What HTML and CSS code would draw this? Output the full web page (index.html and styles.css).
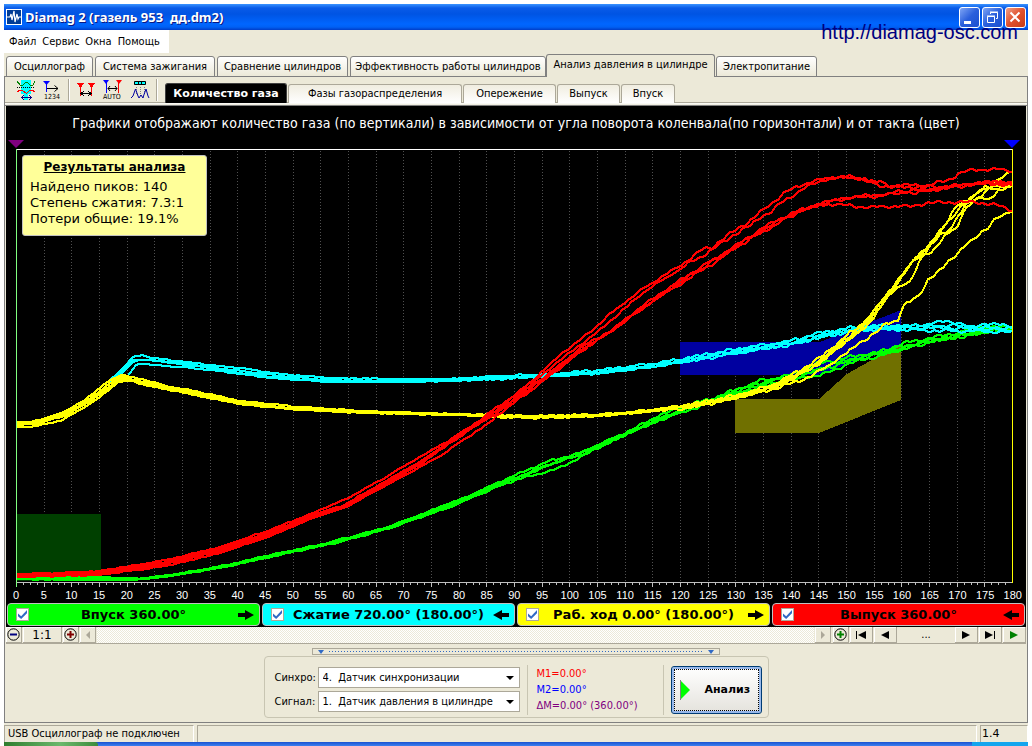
FILE: index.html
```html
<!DOCTYPE html>
<html lang="ru">
<head>
<meta charset="utf-8">
<title>Diamag 2</title>
<link rel="stylesheet" href="styles.css">
</head>
<body>
<div class="window">
  <header class="titlebar">
    <svg class="app-icon" width="16" height="16" viewBox="0 0 16 16" aria-hidden="true"><rect x="0.500" y="0.500" width="15" height="15" fill="#003c96" stroke="#fff"/><path d="M1 8h3l1-3 1 6 2-9 1 11 2-8 1 5 1-2h2" fill="none" stroke="#fff" stroke-width="1.200"/></svg>
    <h1 class="title">Diamag 2 (газель 953&nbsp; дд.dm2)</h1>
    <button class="win-btn" aria-label="Свернуть"><svg width="21" height="21" viewBox="0 0 21 21"><path d="M5 14h7v3H5z" fill="#fff"/></svg></button>
    <button class="win-btn" aria-label="Восстановить"><svg width="21" height="21" viewBox="0 0 21 21" fill="none" stroke="#fff"><path d="M8.500 7V5.500h7v6H14M8 5h8M5.500 9.500h7v6h-7zM5 9h8"/></svg></button>
    <button class="win-btn win-close" aria-label="Закрыть"><svg width="21" height="21" viewBox="0 0 21 21"><path d="M5.500 5.500l9 9M14.500 5.500l-9 9" stroke="#fff" stroke-width="2"/></svg></button>
    <a class="site-link" href="#">http://diamag-osc.com</a>
  </header>
  <nav class="menu">
    <button>Файл</button><button>Сервис</button><button>Окна</button><button>Помощь</button>
  </nav>
  <div class="tabs" role="tablist">
    <button class="tab tab-osc" role="tab">Осциллограф</button>
    <button class="tab tab-ign" role="tab">Система зажигания</button>
    <button class="tab tab-cmp" role="tab">Сравнение цилиндров</button>
    <button class="tab tab-eff" role="tab">Эффективность работы цилиндров</button>
    <button class="tab tab-prs is-active" role="tab" aria-selected="true">Анализ давления в цилиндре</button>
    <button class="tab tab-pwr" role="tab">Электропитание</button>
  </div>
  <main class="panel">
    <div class="toolbar">
      <div class="tools">
        <button class="tool" aria-label="Фазы"><svg width="20" height="20" viewBox="0 0 20 20" fill="none" shape-rendering="crispEdges"><path d="M5 0h10v14h-3v6H8v-6H5z" fill="#00ffff"/><path d="M1 1l3 4h3l3-3h1l3 3h3l2-4" stroke="#008000"/><path d="M1 7.500h18" stroke="#000" stroke-dasharray="1 1"/><path d="M1 12l3-2h2l4 3h1l3-3h2l3 2" stroke="#f00"/><path d="M6 17.500h9M8 15l-2 2.500L8 20M13 15l2 2.500-2 2.500" stroke="#000080"/></svg></button>
        <button class="tool" aria-label="Нумерация"><svg width="20" height="20" viewBox="0 0 20 20" fill="none"><path d="M1 1h7L4.500 5z" fill="#00f"/><path d="M4.500 2v10" stroke="#00f"/><path d="M5 8.500h11M12.500 5.500l3.500 3-3.500 3" stroke="#000"/><text x="2" y="19" class="icon-num">1234</text></svg></button>
        <span class="tool-sep"></span>
        <button class="tool" aria-label="Маркеры"><svg width="20" height="20" viewBox="0 0 20 20" fill="none" shape-rendering="crispEdges"><path d="M1 3h7L4.500 8zM12 3h7l-3.500 5z" fill="#f00"/><path d="M4.500 4v12M15.500 4v12" stroke="#f00"/><path d="M5 13.500h10M8 11l-3 2.500L8 16M12 11l3 2.500L12 16" stroke="#000"/></svg></button>
        <button class="tool" aria-label="Авто"><svg width="22" height="20" viewBox="0 0 22 20" fill="none"><path d="M1 0h6L4 4z" fill="#00f"/><path d="M4.500 1v12" stroke="#00f"/><path d="M14 0h6l-3 4z" fill="#f00"/><path d="M16.500 1v12" stroke="#f00"/><path d="M6 8.500h9M8 6L6 8.500 8 11M13 6l2 2.500-2 2.500" stroke="#000"/><text x="1" y="19" class="icon-num">AUTO</text></svg></button>
        <button class="tool" aria-label="Пики"><svg width="20" height="20" viewBox="0 0 20 20" fill="none"><path d="M4.500 1.500h11v3h-11z" fill="#0ff" stroke="#000"/><path d="M8.500 1v4M11.500 1v4" stroke="#000"/><path d="M6.500 7v7M10.500 7v10M14.500 7v7" stroke="#808080" stroke-dasharray="1 1"/><path d="M1 18l2-2 2.500-7L8 16l1 2 2-3 2 3 .5-2L16 9l2 7 1 2" stroke="#0000a0"/></svg></button>
        <span class="tool-sep"></span>
      </div>
      <div class="subtabs" role="tablist">
        <button class="subtab sub-gas is-active" role="tab" aria-selected="true">Количество газа</button>
        <button class="subtab sub-phase" role="tab">Фазы газораспределения</button>
        <button class="subtab sub-adv" role="tab">Опережение</button>
        <button class="subtab sub-out" role="tab">Выпуск</button>
        <button class="subtab sub-in" role="tab">Впуск</button>
      </div>
    </div>
    <section class="chart">
      <h2 class="caption">Графики отображают количество газа (по вертикали) в зависимости от угла поворота коленвала(по горизонтали) и от такта (цвет)</h2>
      <div class="markers">
        <svg width="16" height="9" viewBox="0 0 16 9"><path d="M0 0h16L8 8z" fill="#800080"/></svg>
        <svg width="16" height="9" viewBox="0 0 16 9"><path d="M0 0h16L8 8z" fill="#00f"/></svg>
      </div>
      <div class="plot">
        <svg id="plot" class="plot-svg" viewBox="16 149 997 438" preserveAspectRatio="none" shape-rendering="crispEdges" aria-label="Количество газа">
          <g id="grid"></g>
          <path d="M17 514h84v67H17z" fill="#004000"/>
          <path d="M680 342h140l81-32v34l-83 31H680z" fill="#0000a0"/>
          <path d="M735 399h84l28-25 23-13 31-17v56l-82 33h-84z" fill="#707000"/>
          <g id="curves"></g>
          <path d="M16 149.500h997" stroke="#fff"/>
          <path d="M16 582.500h997" stroke="#c0c0c0"/>
          <path d="M16.500 149v438" stroke="#80ff80"/>
          <path d="M1012.500 149v434" stroke="#ff0"/>
        </svg>
        <aside class="results">
          <h3>Результаты анализа</h3>
          <p>Найдено пиков: 140</p>
          <p>Степень сжатия: 7.3:1</p>
          <p>Потери общие: 19.1%</p>
        </aside>
      </div>
      <div class="axis">
        <span>0</span><span>5</span><span>10</span><span>15</span><span>20</span><span>25</span><span>30</span><span>35</span><span>40</span><span>45</span><span>50</span><span>55</span><span>60</span><span>65</span><span>70</span><span>75</span><span>80</span><span>85</span><span>90</span><span>95</span><span>100</span><span>105</span><span>110</span><span>115</span><span>120</span><span>125</span><span>130</span><span>135</span><span>140</span><span>145</span><span>150</span><span>155</span><span>160</span><span>165</span><span>170</span><span>175</span><span>180</span>
      </div>
      <div class="legend">
        <div class="stroke s-intake"><input id="c1" type="checkbox" checked><label for="c1">Впуск 360.00°</label><svg width="16" height="10" viewBox="0 0 16 10"><path d="M0 3h7V0l9 5-9 5V7H0z"/></svg></div>
        <div class="stroke s-comp"><input id="c2" type="checkbox" checked><label for="c2">Сжатие 720.00° (180.00°)</label><svg width="16" height="10" viewBox="0 0 16 10"><path d="M16 3H9V0L0 5l9 5V7h7z"/></svg></div>
        <div class="stroke s-power"><input id="c3" type="checkbox" checked><label for="c3">Раб. ход 0.00° (180.00°)</label><svg width="16" height="10" viewBox="0 0 16 10"><path d="M0 3h7V0l9 5-9 5V7H0z"/></svg></div>
        <div class="stroke s-exh"><input id="c4" type="checkbox" checked><label for="c4">Выпуск 360.00°</label><svg width="16" height="10" viewBox="0 0 16 10"><path d="M16 3H9V0L0 5l9 5V7h7z"/></svg></div>
      </div>
    </section>
    <div class="scrollrow">
      <button class="sbtn" aria-label="Уменьшить"><svg width="13" height="13" viewBox="0 0 13 13"><circle cx="6.500" cy="6.500" r="5.700" fill="none" stroke="#000"/><path d="M3 5.500h7v2H3z" fill="#000080"/></svg></button>
      <button class="sbtn sbtn-scale">1:1</button>
      <button class="sbtn" aria-label="Увеличить"><svg width="13" height="13" viewBox="0 0 13 13"><circle cx="6.500" cy="6.500" r="5.700" fill="none" stroke="#000"/><path d="M3 5.500h7v2H3zM5.500 3h2v7h-2z" fill="#800000"/></svg></button>
      <button class="sbtn" aria-label="Влево"><svg width="8" height="8" viewBox="0 0 8 8"><path d="M6 0v8L2 4z" fill="#aca899"/></svg></button>
      <div class="track"></div>
      <button class="sbtn" aria-label="Вправо"><svg width="8" height="8" viewBox="0 0 8 8"><path d="M2 0v8l4-4z" fill="#aca899"/></svg></button>
      <button class="sbtn sbtn-add" aria-label="Добавить"><svg width="13" height="13" viewBox="0 0 13 13"><circle cx="6.500" cy="6.500" r="5.700" fill="none" stroke="#000"/><path d="M3 5.500h7v2H3zM5.500 3h2v7h-2z" fill="#008000"/></svg></button>
      <button class="sbtn sbtn-nav" aria-label="В начало"><svg width="10" height="8" viewBox="0 0 10 8"><path d="M0 0h1v8H0zM10 0v8L2 4z"/></svg></button>
      <button class="sbtn sbtn-nav" aria-label="Назад"><svg width="8" height="8" viewBox="0 0 8 8"><path d="M8 0v8L0 4z"/></svg></button>
      <span class="dots">...</span>
      <button class="sbtn sbtn-nav" aria-label="Вперёд"><svg width="8" height="8" viewBox="0 0 8 8"><path d="M0 0v8l8-4z"/></svg></button>
      <button class="sbtn sbtn-nav" aria-label="В конец"><svg width="10" height="8" viewBox="0 0 10 8"><path d="M9 0h1v8H9zM0 0v8l8-4z"/></svg></button>
      <button class="sbtn sbtn-nav" aria-label="Пуск"><svg width="8" height="8" viewBox="0 0 8 8"><path d="M0 0v8l8-4z" fill="#008000"/></svg></button>
    </div>
    <div class="controls">
      <div class="splitter"><svg width="8" height="4" viewBox="0 0 8 4"><path d="M1 0h6L4 4z" fill="#316ac5"/></svg><i></i><svg width="8" height="4" viewBox="0 0 8 4"><path d="M1 0h6L4 4z" fill="#316ac5"/></svg></div>
      <div class="group">
        <div class="fields">
          <label for="sync">Синхро:</label>
          <span class="combo"><select id="sync"><option>4.&nbsp; Датчик синхронизации</option></select></span>
          <label for="sig">Сигнал:</label>
          <span class="combo"><select id="sig"><option>1.&nbsp; Датчик давления в цилиндре</option></select></span>
        </div>
        <div class="marks">
          <p class="m1">M1=0.00°</p>
          <p class="m2">M2=0.00°</p>
          <p class="dm">ΔM=0.00° (360.00°)</p>
        </div>
        <button class="analyze"><svg width="11" height="20" viewBox="0 0 11 20"><path d="M1 1v18l9-9z" fill="#0f0"/><path d="M0.500 0v20" stroke="#808080"/></svg><span>Анализ</span></button>
      </div>
    </div>
  </main>
  <footer class="status">
    <span class="pane pane-usb">USB Осциллограф не подключен</span>
    <span class="pane pane-mid"></span>
    <span class="pane pane-ver">1.4</span>
  </footer>
  <div class="taskbar"><span class="start"></span><span class="tray"></span></div>
</div>
<script src="chart.js"></script>
</body>
</html>
```
FILE: styles.css
```css
* { box-sizing: border-box; }
body {
  margin: 0;
  background: #fff;
  color: #000;
  font: 11px/16px "DejaVu Sans Condensed", "DejaVu Sans", sans-serif;
}
h1, h2, h3, p { margin: 0; }
button { margin: 0; padding: 0; border: 0; background: none; color: inherit; font: inherit; white-space: nowrap; }
svg { display: block; flex: none; }
.window { display: flex; flex-direction: column; min-height: 100vh; padding: 4px 4px 0; }
.titlebar {
  position: relative;
  display: flex;
  align-items: center;
  gap: 2px;
  height: 26px;
  padding: 0 2px;
  background: linear-gradient(#3a93ff 0, #0a5be8 4px, #0054e3 10px, #0066ff 20px, #0061f5 23px, #003dc8 26px);
}
.title {
  flex: 1;
  padding-left: 1px;
  color: #fff;
  font: bold 13px/20px "Noto Sans", sans-serif;
  text-shadow: 1px 1px 0 #0a1883;
}
.win-btn {
  width: 21px;
  height: 21px;
  border: 1px solid #fff;
  border-radius: 3px;
  background: linear-gradient(135deg, #7fa5f5, #2a5fdc 50%, #1a4fd0);
}
.win-btn svg { margin: -1px; }
.win-close { background: linear-gradient(135deg, #f0a088, #e0502c 50%, #c83c14); }
.site-link {
  position: absolute;
  right: 10px;
  top: 17px;
  z-index: 1;
  color: #000080;
  font: 20px/22px "Liberation Sans", sans-serif;
  text-decoration: none;
}
.menu, .tabs, .panel, .status { background: #ece9d8; }
.menu { display: flex; height: 24px; }
.menu button { height: 23px; padding: 0 3px; background: #fff; }
.menu button:first-child { padding-left: 5px; }
.menu button:last-child { padding-right: 9px; }
.tabs { display: flex; align-items: flex-end; gap: 2px; height: 23px; padding-left: 2px; box-shadow: inset 0 -1px #808080; }
.tab {
  height: 21px;
  border: 1px solid #808080;
  border-radius: 3px 3px 0 0;
  background: linear-gradient(#fff, #ece9d8);
}
.tab.is-active { height: 23px; margin: 0 -1px 0 -2px; padding-bottom: 2px; border-bottom: 0; background: #ece9d8; }
.tab-osc { width: 87px; }
.tab-ign { width: 120px; }
.tab-cmp { width: 131px; }
.tab-eff { width: 196px; }
.tab-prs { width: 169px; }
.tab-pwr { width: 101px; }
.panel { flex: 1; display: flex; flex-direction: column; border: solid #808080; border-width: 0 1px 1px; }
.toolbar {
  display: flex;
  align-items: flex-end;
  height: 29px;
  padding-bottom: 3px;
  background: linear-gradient(#ece9d8 25px, #aca899 25px, #aca899 26px, #fff 26px, #ece9d8 28px, #808080 28px);
}
.tools { display: flex; align-items: center; gap: 6px; width: 160px; height: 26px; padding-left: 11px; }
.tool-sep { width: 2px; height: 22px; border-left: 1px solid #aca899; border-right: 1px solid #fff; }
.icon-num { fill: #000; font: 7px "DejaVu Sans Condensed", "DejaVu Sans", sans-serif; }
.subtabs { display: flex; gap: 1px; align-items: flex-end; }
.subtab {
  height: 19px;
  border: 1px solid #aca899;
  border-bottom: 0;
  border-radius: 3px 3px 0 0;
  background: linear-gradient(#f0ede0, #fff);
}
.subtab.is-active { height: 20px; background: #000; color: #fff; font-family: "DejaVu Sans", sans-serif; font-weight: bold; border-color: #404040; }
.sub-gas { width: 122px; }
.sub-phase { width: 174px; }
.sub-adv { width: 93px; }
.sub-out { width: 63px; }
.sub-in { width: 54px; }
.chart { flex: 1; display: flex; flex-direction: column; margin: 0 1px; background: #000; }
.caption { margin: 8px 0; color: #fff; font: 14px/18px "DejaVu Sans Condensed", "DejaVu Sans", sans-serif; text-align: center; white-space: nowrap; }
.markers { display: flex; justify-content: space-between; height: 9px; padding: 0 6px 0 2px; }
.plot { position: relative; flex: 1; display: flex; min-height: 300px; margin: 0 13px 0 10px; }
.plot-svg { position: absolute; inset: 0; width: 100%; height: 100%; }
.plot-svg path, .plot-svg polyline { vector-effect: non-scaling-stroke; }
.results {
  position: absolute;
  left: 6px;
  top: 6px;
  width: 185px;
  height: 81px;
  padding: 3px 7px;
  border: 1px solid #c0c0c0;
  border-radius: 3px;
  background: #ffff99;
  font: 13px/16px "DejaVu Sans", sans-serif;
  white-space: nowrap;
}
.results h3 { margin-bottom: 4px; font: bold 12px/16px "DejaVu Sans", sans-serif; text-align: center; text-decoration: underline; }
.axis { display: flex; justify-content: space-between; height: 16px; padding: 0 13px 0 10px; color: #fff; font: 11px/16px "Liberation Sans", sans-serif; }
.axis span { display: flex; justify-content: center; width: 0; }
.legend { display: grid; grid-template-columns: repeat(4, 1fr); gap: 2px; padding: 0 1px 1px; }
.stroke {
  display: flex;
  align-items: center;
  height: 23px;
  padding: 0 5px 0 8px;
  border: 1px solid #c0c0c0;
  border-radius: 4px;
  font: bold 13px/20px "DejaVu Sans", sans-serif;
}
.stroke label { flex: 1; text-align: center; white-space: nowrap; }
.stroke input { appearance: none; display: grid; place-items: center; width: 13px; height: 13px; margin: 0; border: 1px solid #aca899; background: #fff; }
.stroke input:checked::before {
  content: "";
  width: 9px;
  height: 9px;
  background: #316ac5;
  clip-path: polygon(0 40%, 35% 70%, 100% 0, 100% 35%, 35% 100%, 0 70%);
}
.s-intake { background: #00ff00; }
.s-comp { background: #00ffff; }
.s-power { background: #ffff00; }
.s-exh { background: #ff0000; }
.scrollrow { display: flex; gap: 1px; height: 17px; margin: 0 1px; border-bottom: 1px solid #aca899; }
.sbtn { display: grid; place-items: center; flex: none; width: 16px; height: 16px; border-right: 1px solid #aca899; border-bottom: 1px solid #aca899; box-shadow: inset 1px 1px #fff; }
.sbtn-scale { width: 39px; font: 12px/14px "DejaVu Sans", sans-serif; }
.sbtn-add { margin-left: 1px; }
.sbtn-nav { width: 23px; }
.track { flex: 1; background: repeating-conic-gradient(#fff 0 25%, #ece9d8 0 50%) 0 0 / 2px 2px; }
.dots { width: 56px; text-align: center; }
.controls { display: flex; flex-direction: column; align-items: center; padding: 4px 0; }
.splitter { display: flex; align-items: center; gap: 4px; width: 408px; height: 7px; padding: 0 4px; border: 1px solid #aca899; }
.splitter i { flex: 1; height: 1px; background: repeating-linear-gradient(90deg, #316ac5 0 1px, transparent 1px 3px); }
.group { display: flex; align-items: center; width: 505px; height: 62px; margin-top: 1px; padding: 5px 5px 0 10px; border: 1px solid #c8c5b2; border-radius: 4px; }
.fields { display: grid; grid-template-columns: 43px 202px; gap: 3px 0; align-items: center; }
.combo { position: relative; display: flex; height: 21px; }
.combo::after { content: ""; position: absolute; right: 6px; top: 9px; border: solid transparent; border-width: 4px 4px 0; border-top-color: #000; }
.combo select { appearance: none; width: 100%; padding: 0 4px; border: 1px solid #aca899; border-radius: 0; background: #fff; color: #000; font: inherit; }
.marks { display: flex; flex-direction: column; justify-content: center; width: 137px; height: 50px; margin: 0 7px; padding-left: 9px; border: solid #c8c5b2; border-width: 0 1px; white-space: nowrap; }
.m1 { color: #f00; }
.m2 { color: #00f; }
.dm { color: #800080; }
.analyze {
  display: flex;
  align-items: center;
  gap: 14px;
  width: 91px;
  height: 48px;
  padding-left: 8px;
  border: 1px solid #003c74;
  border-radius: 3px;
  outline: 1px dotted #000;
  outline-offset: -4px;
  background: linear-gradient(#fff, #e4e2dc);
  box-shadow: inset 0 0 0 2px #98b8ea;
  font: bold 11px/16px "DejaVu Sans", sans-serif;
}
.status { display: flex; gap: 3px; height: 19px; padding-top: 2px; }
.pane { height: 17px; padding-left: 3px; border: solid #aca899; border-width: 1px 0 0 1px; border-right: 1px solid #fff; white-space: nowrap; }
.pane-usb { width: 190px; }
.pane-mid { flex: 1; }
.pane-ver { width: 48px; padding-left: 1px; font-family: "DejaVu Sans", sans-serif; }
.taskbar { display: flex; justify-content: space-between; height: 4px; background: linear-gradient(#1a52d0, #3a80f0); }
.start { width: 94px; background: linear-gradient(90deg, #2e7d2e, #6cb86c 60%, #3c8c3c); border-radius: 0 3px 0 0; }
.tray { width: 56px; background: #14a5ee; }
```
FILE: chart.js
```js
const NS = 'http://www.w3.org/2000/svg';
const X0 = 16.5, STEP = 996 / 180;

function add(parent, tag, attrs) {
  const el = document.createElementNS(NS, tag);
  for (const k in attrs) el.setAttribute(k, attrs[k]);
  document.getElementById(parent).appendChild(el);
}

for (let a = 1.25; a < 180; a += 1.25) {
  const x = Math.floor(X0 + a * STEP) + 0.5;
  const major = a % 5 === 0;
  if (major) add('grid', 'path', { d: `M${x} 151V582`, stroke: '#505050', 'stroke-dasharray': '1 2' });
  add('grid', 'path', { d: `M${x} 583v${major ? 4 : 2}`, stroke: '#c0c0c0' });
}

const cyan = [
  '16,422 28,422 40,420 55,415 66,411 77,405 90,396 110,380 120,371 133,357 142,355 153,358 180,361 210,365 240,368 280,374 330,378 400,379 450,379 500,376 550,374 600,370 650,364 688,358 720,352 750,347 790,341 815,334 850,328 875,326 910,326 935,323 945,321 960,323 970,328 985,323 1000,325 1012,326',
  '16,424 40,422 66,413 90,399 110,383 120,373 133,360 150,360 180,363 210,367 240,371 280,376 330,380 400,381 450,380 500,377 550,375 600,371 650,366 688,359 720,354 750,348 790,343 815,336 850,329 880,327 920,327 950,325 975,328 1012,328',
  '16,425 40,423 66,415 90,401 110,387 120,375 134,361 150,360 180,364 210,368 240,373 280,378 330,381 400,382 450,381 500,378 550,376 600,373 650,367 688,361 720,355 750,350 790,345 815,338 850,331 880,329 920,330 950,331 975,331 1012,332',
  '16,427 33,427 45,424 60,421 80,410 100,397 118,382 124,380 131,372 137,364 145,364 180,367 210,370 240,374 280,379 330,382 400,382 450,381 500,379 550,376 600,373 650,367 688,361 720,356 790,344 830,335 860,330 900,328 950,328 1012,330'
];
const yellow = [
  '16,422 28,422 40,420 55,415 66,411 77,405 90,396 110,380 122,375 150,381 166,386 195,391 240,401 290,406 344,410 417,413 487,415 530,416 580,415 610,414 650,410 688,405 735,396 760,389 777,383 790,376 820,358 845,337 865,322 880,304 900,279 912,262 930,245 945,225 960,207 970,200 980,189 994,187 1012,185',
  '16,424 40,422 66,413 90,399 110,383 121,377 150,383 195,393 240,402 290,408 344,411 417,413 487,415 530,417 610,415 650,411 688,406 735,397 777,385 800,372 820,362 845,342 865,326 890,294 910,281 920,260 940,234 956,230 968,204 985,194 994,184 1004,174 1012,172',
  '16,425 40,423 66,415 90,401 110,387 124,379 150,385 195,395 240,404 290,409 344,412 417,414 487,416 530,417 610,415 650,411 688,407 735,398 777,386 800,374 820,363 845,342 865,328 885,301 904,273 912,262 933,250 945,236 953,225 965,204 980,198 990,199 1000,188 1012,187',
  '16,427 33,427 45,424 60,421 80,410 100,397 118,382 130,381 150,386 195,395 240,404 290,409 344,412 417,414 487,416 530,418 580,417 610,415 650,411 688,408 735,398 777,388 810,377 835,361 848,353 858,343 865,340 876,333 886,323 898,320 902,309 908,303 920,294 928,280 936,275 948,261 960,252 967,244 975,238 982,231 988,228 995,220 1005,214 1012,210',
  '16,425 40,423 66,414 90,400 110,386 122,378 150,384 195,393 240,403 290,408 344,411 487,415 530,417 610,415 650,411 688,406 735,397 777,386 800,375 825,356 845,339 865,323 880,302 896,284 912,261 925,250 940,232 957,206 975,195 985,188 1000,189 1012,186'
];
const red = [
  '16,574 60,573 100,571 130,566 166,560 220,547 270,530 310,514 344,500 384,478 420,457 450,440 480,420 500,405 515,395 535,378 560,355 594,329 610,314 645,287 665,275 688,260 705,248 712,247 735,230 750,221 772,203 785,193 800,185 822,179 835,177 855,177 870,181 880,182 890,186 930,185 948,180 960,173 975,170 994,169 1012,171',
  '16,575 100,572 166,562 220,549 270,532 310,516 344,505 384,482 420,462 450,441 480,421 500,407 530,385 560,360 600,330 645,291 688,264 712,250 735,234 750,226 762,215 770,213 785,200 800,191 815,183 827,179 850,177 865,180 875,184 888,187 940,187 975,184 995,181 1012,184',
  '16,576 100,574 166,564 220,551 270,535 310,518 344,506 384,485 420,464 450,443 480,423 500,409 530,387 560,365 580,348 612,330 645,304 688,275 700,268 735,246 760,230 775,221 795,212 830,201 850,198 880,196 905,192 920,190 945,188 975,184 990,182 1012,183',
  '16,577 100,575 166,566 220,553 270,536 310,519 344,508 400,478 440,456 460,442 488,424 500,413 530,391 560,368 580,351 612,331 645,306 688,279 720,259 735,248 760,233 780,222 800,210 820,205 835,204 850,206 875,207 900,206 908,207 925,203 975,202 985,204 1000,206 1012,210',
  '16,577 100,574 166,564 220,551 270,534 310,517 344,506 384,484 420,463 480,423 500,411 560,366 612,330 688,277 735,247 780,220 820,204 850,197 880,195 905,191 915,193 945,188 970,183 1012,185'
];
const green = [
  '16,577 66,577 100,577 137,579 170,575 195,571 230,565 260,557 290,551 344,540 390,526 420,515 450,503 470,496 490,486 515,475 550,461 580,453 600,444 620,435 645,423 660,415 688,405 712,399 735,390 760,381 790,375 820,363 850,357 880,352 900,344 930,338 960,332 975,327 1012,327',
  '16,578 66,579 137,579 170,576 195,572 230,566 260,559 290,552 344,540 390,527 420,516 450,505 490,487 515,478 550,464 580,455 620,437 660,418 688,408 735,392 760,383 790,377 830,365 850,360 880,353 900,347 930,340 960,335 985,330 1012,328',
  '16,579 66,580 137,580 195,572 260,559 344,541 390,528 450,507 490,490 515,480 560,468 600,447 645,425 680,413 712,402 760,386 800,378 825,374 850,363 880,356 930,341 960,337 985,332 1012,329',
  '16,578 100,579 150,578 195,571 290,552 390,527 450,506 500,485 550,465 620,437 688,408 735,393 800,376 850,361 900,349 960,336 1012,328'
];

function trace(samples, seed, color) {
  const p = samples.split(' ').map(s => s.split(',').map(Number));
  const out = [];
  let i = 0;
  for (let x = 16; x <= 1012; x += 3) {
    while (i < p.length - 2 && p[i + 1][0] < x) i++;
    const [ax, ay] = p[i], [bx, by] = p[i + 1];
    const y = ay + (by - ay) * (x - ax) / (bx - ax);
    const amp = x < 480 ? 0.4 : x < 680 ? 0.9 : 1.6;
    const noise = Math.sin(x * 0.21 + seed * 2.3) * 0.6 + Math.sin(x * 0.57 + seed * 4.1) * 0.6;
    out.push(x + ',' + Math.round(y + noise * amp));
  }
  add('curves', 'polyline', { points: out.join(' '), fill: 'none', stroke: color, 'stroke-width': 2 });
}

[[green, '#00ff00'], [cyan, '#00ffff'], [yellow, '#ffff00'], [red, '#ff0000']]
  .forEach(([set, color]) => set.forEach((s, n) => trace(s, n + 1, color)));
```
